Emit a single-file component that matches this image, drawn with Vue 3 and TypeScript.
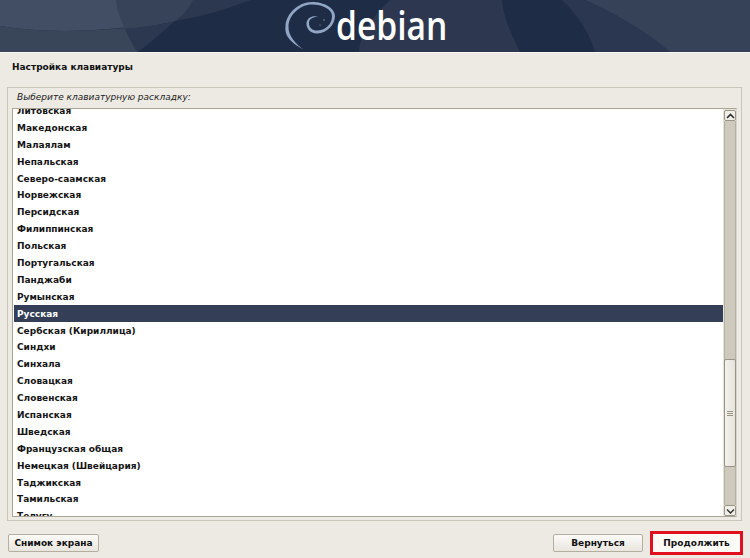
<script setup lang="ts">
const layouts: string[] = [
  'Литовская','Македонская','Малаялам','Непальская','Северо-саамская','Норвежская','Персидская','Филиппинская','Польская','Португальская','Панджаби','Румынская','Русская','Сербская (Кириллица)','Синдхи','Синхала','Словацкая','Словенская','Испанская','Шведская','Французская общая','Немецкая (Швейцария)','Таджикская','Тамильская','Телугу'
]
const selected = 'Русская'
</script>

<template>
  <div class="page">
    <header class="banner">
      <svg class="waves" viewBox="0 0 750 52" preserveAspectRatio="none" aria-hidden="true">
        <rect width="750" height="52" fill="#1f2c45" />
        <path d="M0 0H250C215 12 170 24 120 28C70 33 30 31 0 26Z" fill="#414e63" />
        <path d="M0 26C30 31 70 33 125 28C130 38 133 46 138 52H0Z" fill="#394659" />
        <path d="M116 0H193C186 14 175 21 175 21C160 25 140 28 125 29C120 18 116 8 116 0Z" fill="#364358" />
        <path d="M193 0H250C225 10 200 17 175 21C184 14 189 8 193 0Z" fill="#2c3750" />
        <path d="M125 29C142 27 160 25 175 21C162 32 150 43 138 52C132 44 128 36 125 29Z" fill="#2c3750" />
        <path d="M390 0H502C503 18 512 35 520 52H359C361 30 375 15 390 0Z" fill="#2d3850" />
        <path d="M562 0H585C625 18 650 35 670 52H595C590 34 578 15 562 0Z" fill="#2b3650" />
        <path d="M585 0H750V52H670C650 35 625 18 585 0Z" fill="#364258" />
      </svg>
      <div class="brand">
        <svg class="swirl" viewBox="0 0 60 54" aria-hidden="true">
          <path d="M22 50C12 44 2 38 3.5 26C4 14 16 2 30 2C42 2 53 8 53 16C53 24 46 33 35 33.5C28 33.5 24 28 24.5 23C25 18 31 15 36 17C31 16.5 27 19 27 23C27 28 31 31 36 30.5C44 30 50 24 50 16C50 9 40 4.5 30 4.5C18 4.5 7 15 6.5 26C6 36 14 44 22 50Z" fill="#8fa6c4" />
          <circle cx="42" cy="20" r="0.7" fill="#8fa6c4" />
          <circle cx="38" cy="25" r="0.6" fill="#8fa6c4" />
        </svg>
        <span class="wordmark">debian</span>
      </div>
    </header>

    <main class="content">
      <h1 class="title">Настройка клавиатуры</h1>
      <section class="frame">
        <p class="prompt">Выберите клавиатурную раскладку:</p>
        <div class="listbox">
          <div class="list">
            <ul class="rows">
              <li v-for="name in layouts" :key="name" class="row" :class="{ selected: name === selected }">{{ name }}</li>
            </ul>
          </div>
          <div class="scrollbar">
            <div class="arrow">
              <svg width="9" height="6" viewBox="0 0 9 6"><path d="M1 5L4.5 1.5L8 5" fill="none" stroke="#2e2e2e" stroke-width="1.6" /></svg>
            </div>
            <div class="track">
              <div class="thumb">
                <span class="grip" /><span class="grip" /><span class="grip" />
              </div>
            </div>
            <div class="arrow">
              <svg width="9" height="6" viewBox="0 0 9 6"><path d="M1 1.5L4.5 5L8 1.5" fill="none" stroke="#2e2e2e" stroke-width="1.4" /></svg>
            </div>
          </div>
        </div>
      </section>
      <footer class="actions">
        <button class="btn">Снимок экрана</button>
        <div class="nav">
          <button class="btn back">Вернуться</button>
          <button class="btn next">Продолжить</button>
        </div>
      </footer>
    </main>
  </div>
</template>

<style>
html, body { margin: 0; background: #edeae3; }
</style>

<style scoped>
.page {
  width: 750px;
  height: 558px;
  overflow: hidden;
  display: flex;
  flex-direction: column;
  background: #edeae3;
  font-family: "DejaVu Sans", sans-serif;
  font-size: 9px;
  color: #111;
}
.banner {
  position: relative;
  height: 52px;
  flex: none;
  border-bottom: 1px solid #f8f7f3;
  overflow: hidden;
}
.waves { position: absolute; inset: 0; width: 100%; height: 100%; }
.brand { position: relative; display: flex; align-items: flex-start; padding-left: 282px; }
.swirl { width: 60px; height: 54px; flex: none; }
.wordmark {
  font-family: "Open Sans", sans-serif;
  font-size: 40px;
  font-weight: 600;
  line-height: 50px;
  color: #fff;
  transform: scaleX(0.84);
  transform-origin: left center;
  margin-left: -6px;
}
.content { flex: 1; display: flex; flex-direction: column; padding: 0 7px; min-height: 0; }
.title { margin: 8px 0 0 5px; font-size: 9px; line-height: 13px; font-weight: 700; }
.frame {
  margin-top: 13px;
  height: 434px;
  width: 735px;
  box-sizing: border-box;
  border: 1px solid #c9c5bb;
  padding: 0 4px 3px 4px;
  display: flex;
  flex-direction: column;
  flex: none;
}
.prompt { margin: 0; height: 20px; padding-left: 5px; line-height: 19px; font-style: italic; color: #222; flex: none; }
.listbox {
  flex: 1;
  min-height: 0;
  display: flex;
  border: 1px solid #a8a496;
  border-right-color: #d8d5cc;
  background: #e6e3da;
}
.list { flex: none; width: 710px; box-sizing: border-box; padding-left: 1px; background: #fff; overflow: hidden; }
.rows { list-style: none; margin: -7px 0 0; padding: 0; }
.row { box-sizing: border-box; height: 16.9px; padding: 1px 0 0 3px; line-height: 16px; font-weight: 700; color: #141414; white-space: nowrap; }
.row.selected { background: #343f57; color: #fff; }
.scrollbar { width: 12px; padding: 1px 0 0 1px; display: flex; flex-direction: column; flex: none; }
.arrow {
  height: 11px;
  flex: none;
  box-sizing: border-box;
  border: 1px solid #9a9484;
  border-radius: 2px;
  background: #f1efe9;
  display: flex;
  align-items: center;
  justify-content: center;
}
.track { flex: 1; background: #cdc9bc; display: flex; flex-direction: column; justify-content: flex-end; padding-bottom: 38px; border-left: 1px solid #b5b0a2; border-right: 1px solid #b5b0a2; }
.thumb {
  height: 108px;
  box-sizing: border-box;
  margin: 0 -1px;
  border: 1px solid #9a9484;
  border-radius: 2px;
  background: linear-gradient(90deg, #f3f1ec, #e6e3dc);
  display: flex;
  flex-direction: column;
  align-items: center;
  justify-content: center;
  gap: 1px;
}
.grip { width: 6px; height: 1px; background: #9a9484; }
.actions { display: flex; justify-content: space-between; align-items: center; margin-top: 10px; padding: 0 0 0 1px; }
.nav { display: flex; align-items: center; gap: 7px; }
.btn {
  height: 18px;
  box-sizing: border-box;
  padding: 0;
  border: 1px solid #b3ae9f;
  border-radius: 2px;
  background: linear-gradient(#fbfaf8, #e9e6df);
  font: 700 9px "DejaVu Sans", sans-serif;
  color: #111;
  width: 91px;
}
.back { width: 90px; }
.next {
  width: 93px;
  height: 24px;
  border: 3px solid #e0101f;
  border-radius: 0;
  background: #fbfaf7;
}
</style>
